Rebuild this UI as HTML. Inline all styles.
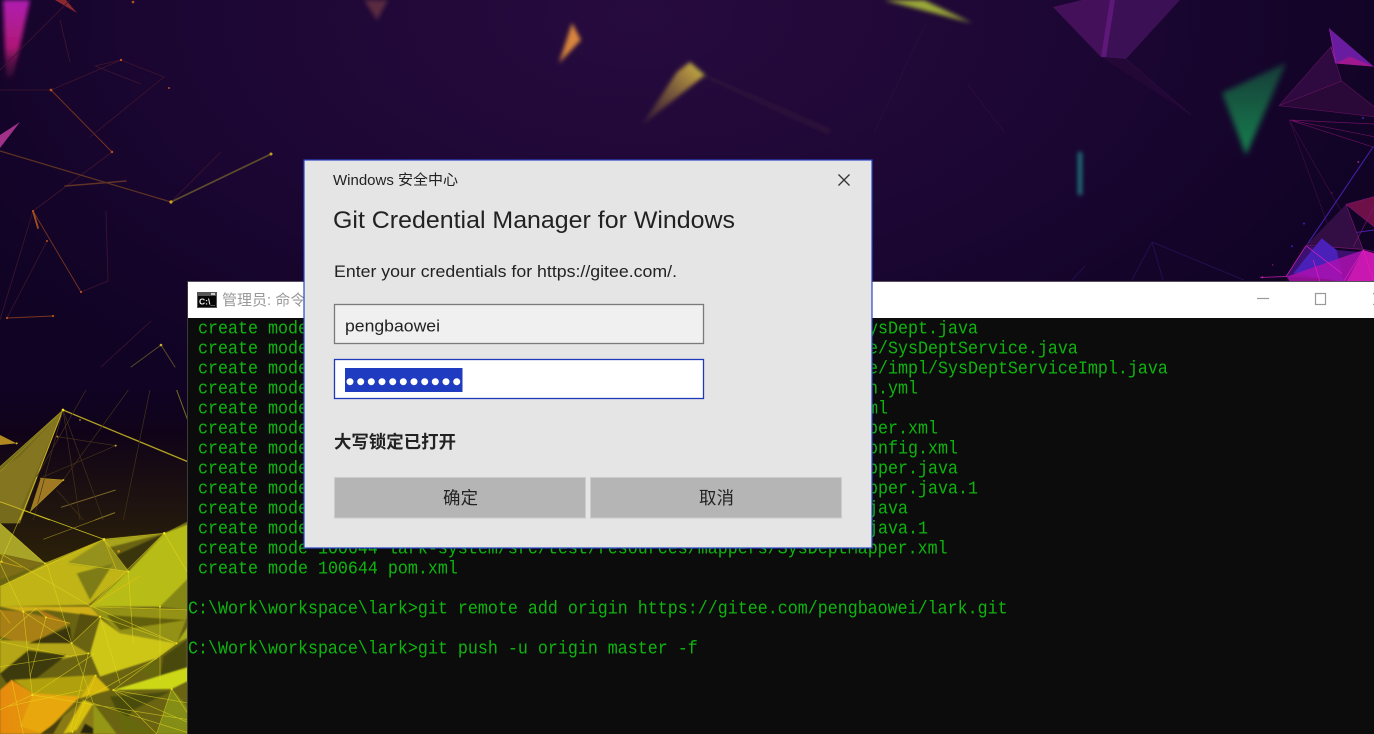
<!DOCTYPE html>
<html><head><meta charset="utf-8"><style>
html,body{margin:0;padding:0;width:1374px;height:734px;overflow:hidden;background:#16052a}
#bg{position:absolute;left:0;top:0}
#term{position:absolute;left:187px;top:281px;width:1187px;height:453px;background:#0c0c0c;overflow:hidden;border-left:1px solid #3a3a3a;box-sizing:border-box}
#bar{position:absolute;left:0;top:0;width:100%;height:37px;background:#fff;border-top:1px solid #55505a;box-sizing:border-box}
#term pre{position:absolute;margin:0;font:16.67px/18px "Liberation Mono",monospace;color:#0fb40f;white-space:pre;transform:scaleY(1.11111);transform-origin:0 0}
#ttl{position:absolute;left:34px;top:9px;font:15px/20px "Liberation Sans","Noto Sans CJK SC",sans-serif;color:#999;white-space:nowrap}
#dlg{position:absolute;left:0;top:0}
</style></head><body>
<svg id="bg" width="1374" height="734" viewBox="0 0 1374 734" xmlns="http://www.w3.org/2000/svg">
<defs>
<radialGradient id="g1" gradientUnits="userSpaceOnUse" cx="640" cy="30" r="800" gradientTransform="scale(1 .55)"><stop offset="0" stop-color="#270b3f"/><stop offset=".6" stop-color="#1b0632"/><stop offset="1" stop-color="#100324"/></radialGradient>
<linearGradient id="g2" x1="0" y1="380" x2="0" y2="560" gradientUnits="userSpaceOnUse"><stop offset="0" stop-color="#120320" stop-opacity="0"/><stop offset=".3" stop-color="#100318"/><stop offset="1" stop-color="#2a2008"/></linearGradient>
<linearGradient id="mg" x1="0" y1="0" x2="0" y2="1"><stop offset="0" stop-color="#b020b0"/><stop offset=".6" stop-color="#b01878"/><stop offset="1" stop-color="#5a1040" stop-opacity=".3"/></linearGradient>
<linearGradient id="yl" x1="1" y1="0" x2="0" y2="1"><stop offset="0" stop-color="#b8c440"/><stop offset=".2" stop-color="#b09040"/><stop offset="1" stop-color="#6a4a30" stop-opacity=".3"/></linearGradient>
<linearGradient id="gr" x1="0" y1="0" x2="0" y2="1"><stop offset="0" stop-color="#143c38"/><stop offset="1" stop-color="#16804e"/></linearGradient>
<linearGradient id="or" x1="0" y1="0" x2="1" y2="0"><stop offset="0" stop-color="#e88a10"/><stop offset="1" stop-color="#d8a810"/></linearGradient>
<filter id="b3" x="-40%" y="-40%" width="180%" height="180%"><feGaussianBlur stdDeviation="3"/></filter>
<filter id="b2" x="-60%" y="-30%" width="220%" height="160%"><feGaussianBlur stdDeviation="2"/></filter>
<filter id="bs" x="-5%" y="-5%" width="110%" height="110%"><feGaussianBlur stdDeviation="2.4"/></filter>
</defs>
<rect width="1374" height="734" fill="url(#g1)"/>
<rect y="380" width="190" height="354" fill="url(#g2)"/>

<!-- blurred shards -->
<g filter="url(#b2)">
<polygon points="3,0 30,0 13,78 6,78" fill="url(#mg)"/>
<polygon points="364,0 388,0 377,20" fill="#5a2a40"/>
<polygon points="572,23 581,40 559,63" fill="#d8853c"/>
<polygon points="690,62 705,75 642,125 677,72" fill="url(#yl)"/>
<polygon points="884,0 924,0 972,23" fill="#9aa838"/>
<polygon points="1078,152 1082,152 1082,195 1078,195" fill="#1a7a80"/>
<polygon points="704,77 708,76 832,130 828,134" fill="#40203a" opacity=".45"/>
</g>
<polygon points="1222,93 1286,63 1246,155" fill="url(#gr)" filter="url(#b3)"/>
<polygon points="55,0 66,0 77,13" fill="#8a2830"/>
<polygon points="20,122 0,135 0,148" fill="#a03088"/>

<!-- top-left lines -->
<g fill="none" stroke-linecap="round">
<g stroke="#7a3420" stroke-width=".9">
<path d="M51 90L112 152M33 211L81 292M7 318L53 316"/>
</g>
<g stroke="#3e162e" stroke-width=".8">
<path d="M51 90L121 60L164 77L90 137M121 60L95 66L141 84M0 90L51 90M112 152L33 211M47 241L7 318M106 211L108 281M151 321L101 367M70 0L0 70M70 62L60 20M33 211L0 320M171 202L221 152M81 292L108 281"/>
</g>
<path d="M0 151L171 202" stroke="#5c3222" stroke-width="1.3"/>
<path d="M171 202L271 154" stroke="#5e4c2c" stroke-width="1.7"/>
<path d="M65 186L126 181" stroke="#603228" stroke-width="1.4"/>
<path d="M33 211L38 228" stroke="#a05020" stroke-width="1.8"/>
<path d="M161 345L131 367M161 345L175 367" stroke="#5a4c26" stroke-width="1"/>
</g>
<g fill="#b85020">
<circle cx="51" cy="90" r="1.4"/><circle cx="121" cy="60" r="1.2"/><circle cx="112" cy="152" r="1.2"/><circle cx="33" cy="211" r="1.1"/><circle cx="81" cy="292" r="1.1"/><circle cx="53" cy="316" r="1.1"/><circle cx="7" cy="318" r="1.1"/><circle cx="133" cy="2" r="1.3"/><circle cx="169" cy="88" r="1"/><circle cx="47" cy="241" r="1"/>
</g>
<circle cx="171" cy="202" r="1.6" fill="#d0a020"/><circle cx="271" cy="154" r="1.5" fill="#c8a020"/><circle cx="161" cy="345" r="1.3" fill="#c8b030"/>

<!-- top-right purple -->
<polygon points="1126,59 1101,57 1191,115" fill="#2c0a3c" opacity=".5"/>
<polygon points="1053,7 1082,0 1115,0 1101,57" fill="#45105a"/>
<polygon points="1115,0 1180,0 1126,59 1101,57" fill="#3c1054"/>
<polygon points="1115,0 1110,0 1101,57 1106,57" fill="#5e187a"/>
<path d="M1126 59L1191 115M926 23L874 133M968 85L1005 133" stroke="#2e0d42" stroke-width=".8" fill="none"/>
<path d="M1152 242L1132 280M1152 242L1163 280M1152 242L1244 280M1085 266L1072 280" stroke="#25125a" stroke-width=".8" fill="none"/>

<!-- right cluster (zoom coords) -->
<g transform="translate(1260 20) scale(.3333)" fill="none">
<polygon points="57,257 213,80 245,183" fill="#2e0a40"/>
<polygon points="57,257 245,183 342,260 342,290" fill="#2a0838"/>
<path d="M57 257L213 80L245 183L57 257L342 290M245 183L342 260" stroke="#5e1258" stroke-width="2"/>
<polygon points="208,25 342,140 225,130" fill="#6a1ca0"/>
<polygon points="270,110 342,140 225,130" fill="#a01890"/>
<path d="M213 80L228 130M208 25L228 130" stroke="#a020a0" stroke-width="2"/>
<path d="M88 300L342 312M88 300L342 350M88 300L342 382" stroke="#6a1060" stroke-width="2"/>
<path d="M88 300L310 690M88 300L220 660" stroke="#3e0c44" stroke-width="2"/>
<path d="M340 380L140 676M342 630L186 652" stroke="#4a20b0" stroke-width="3"/>
<polygon points="258,553 342,530 342,620" fill="#6e1048"/>
<polygon points="138,677 258,553 310,690" fill="#320e44"/>
<path d="M258 553L342 530M258 553L342 620M258 553L310 690M342 560L280 680M140 676L310 688L342 695" stroke="#7a1674" stroke-width="2"/>
<polygon points="138,677 78,770 342,786 342,700 230,690" fill="#3c1070"/>
<polygon points="185,655 100,760 250,786 230,690" fill="#4a20b8"/>
<polygon points="80,770 310,690 342,700 342,786 90,786" fill="#b010b0" opacity=".8"/>
<polygon points="310,690 342,700 342,786 260,786" fill="#c818b0"/>
<path d="M138 677L78 770M138 677L245 760M310 690L250 786M310 690L342 786M0 772L80 770M160 720L180 786" stroke="#e020c0" stroke-width="2"/>
<g stroke="none"><circle cx="309" cy="294" r="3" fill="#4020b0"/><circle cx="295" cy="426" r="3" fill="#902090"/><circle cx="132" cy="611" r="3" fill="#3020c0"/><circle cx="96" cy="679" r="3" fill="#3020c0"/><circle cx="38" cy="735" r="2" fill="#a01860"/><circle cx="7" cy="772" r="3" fill="#c020a0"/><circle cx="216" cy="519" r="2" fill="#702060"/></g>
</g>

<!-- left yellow upper (zoom 11 coords: offset 0,390) -->
<g transform="translate(0 390) scale(.3333)" fill="none">
<polygon points="189,60 0,230 0,400 60,400" fill="#766a1c"/>
<polygon points="189,60 60,200 0,240 0,330 60,360" fill="#8a7a22" opacity=".7"/>
<polygon points="0,135 50,160 0,165" fill="#b08a20"/>
<polygon points="122,265 190,270 90,365" fill="#a07a22"/>
<path d="M189 60L60 390" stroke="#c8b020" stroke-width="3"/>
<path d="M189 60L0 230M189 60L0 245" stroke="#9a9020" stroke-width="2"/>
<path d="M189 60L563 215" stroke="#b0a020" stroke-width="4"/>
<path d="M0 335L150 390" stroke="#c8b420" stroke-width="3"/>
<path d="M183 352L347 300M285 390L345 368" stroke="#7a6428" stroke-width="3"/>
<path d="M172 140L347 167L120 265M258 0L110 260M385 0L190 270M189 60L240 390M189 60L310 390M170 300L250 390M100 390L189 60M450 0L370 390" stroke="#453418" stroke-width="2"/>
<path d="M530 0L563 90" stroke="#7a7020" stroke-width="3"/>
<path d="M120 265L190 270L90 365" stroke="#b09020" stroke-width="2"/>
<g stroke="none"><circle cx="189" cy="60" r="4" fill="#f0e020"/><circle cx="240" cy="90" r="3" fill="#a05a18"/><circle cx="347" cy="167" r="3" fill="#c8a030"/><circle cx="190" cy="270" r="3" fill="#d0a020"/><circle cx="50" cy="160" r="3" fill="#e0b020"/><circle cx="172" cy="140" r="3" fill="#b08020"/></g>
</g>

<!-- yellow mesh (zoom 9 coords: offset 0,510) -->
<g transform="translate(0 510) scale(.3333)">
<polygon points="0,40 135,160 312,88 493,70 570,30 570,680 0,680" fill="#6a6412"/>
<g filter="url(#bs)">
<polygon points="0,130 135,160 0,210" fill="#7e6e12"/>
<polygon points="312,88 493,70 140,160" fill="#a8a41e"/>
<polygon points="340,140 493,70 385,180" fill="#3a3408"/>
<polygon points="0,230 140,160 312,90 385,185 265,285 0,290" fill="#c0b416"/>
<polygon points="200,160 310,90 385,185" fill="#94921a"/>
<polygon points="230,190 340,160 270,270" fill="#7e7c12"/>
<polygon points="493,70 570,40 570,200 480,290 270,290 385,185" fill="#b8bc18"/>
<polygon points="570,200 570,300 480,290" fill="#848612"/>
<polygon points="0,290 270,290 300,320 140,300 70,305" fill="#d0b012"/>
<polygon points="0,300 70,305 210,340 85,405 0,380" fill="#a88012"/>
<polygon points="108,295 210,340 138,322" fill="#b87818"/>
<polygon points="0,390 215,400 265,430 0,490" fill="#b4a612"/>
<polygon points="85,400 210,350 215,400" fill="#3a340a"/>
<polygon points="85,420 200,435 90,520 20,520 0,490" fill="#3e3a0c"/>
<polygon points="240,310 300,320 215,400" fill="#56500c"/>
<polygon points="270,290 570,300 530,400 360,370" fill="#949212"/>
<polygon points="320,315 560,330 360,360" fill="#625e0e"/>
<polygon points="300,325 360,370 530,400 470,445 300,500 270,430" fill="#cec612"/>
<polygon points="490,440 560,390 560,500 480,510" fill="#484a0c"/>
<polygon points="420,480 470,445 480,510" fill="#66680e"/>
<polygon points="530,400 570,340 570,380" fill="#a8b018"/>
<polygon points="0,540 35,510 100,550 240,560 60,650 130,672 0,672" fill="url(#or)"/>
<polygon points="40,510 285,495 240,565 100,550" fill="#b0a010"/>
<polygon points="100,550 240,560 130,672 60,650" fill="#e8a810"/>
<polygon points="285,495 330,540 240,565" fill="#d8b810"/>
<polygon points="130,672 250,570 280,580 280,672" fill="#8a7a12"/>
<polygon points="250,570 280,580 230,660 190,672" fill="#d8c010"/>
<polygon points="340,540 570,470 570,510 515,537" fill="#ccd818"/>
<polygon points="280,580 350,672 280,672" fill="#949618"/>
<polygon points="330,560 510,545 400,600 370,640" fill="#4a4c0c"/>
<polygon points="470,672 515,537 570,600 570,672" fill="#848e12"/>
<polygon points="350,600 470,672 370,672" fill="#66680e"/>
<polygon points="240,670 255,640 280,655 280,672" fill="#2c2808"/>
<polygon points="120,672 190,620 160,672" fill="#4a400a"/>
</g>
<polygon points="0,40 135,160 0,130" fill="#a8a428"/>
<g fill="none" stroke="#e8dc20" stroke-width="2" stroke-opacity=".65">
<path d="M135 160L312 88L493 70L270 290M493 70L570 200M312 88L385 185L400 400M140 160L215 400M200 158L385 185M0 130L265 285L530 400M70 305L215 400M108 295L138 322L210 340M0 390L108 295M138 322L90 500M300 320L530 400M300 320L215 400M300 320L360 520M270 290L570 300M480 290L480 510M530 400L340 540M0 230L312 88M0 40L135 160M70 0L0 160"/>
<path d="M97 555L285 430M97 555L570 630M97 555L0 600M265 430L0 470M265 430L210 670M287 495L217 670M340 540L570 580M340 540L570 640M340 540L470 672M515 537L470 672M515 537L570 620M280 580L570 670M470 445L260 565M215 400L280 580M35 510L70 672M0 160L70 305L97 555M0 395L215 440M20 590L250 540"/>
</g>
<g fill="none" stroke="#f0c010" stroke-width="2.500" stroke-opacity=".6">
<path d="M65 172L0 155M312 88L350 180M420 198L270 290M0 300L30 340"/>
</g>
<path d="M70 0L312 88" stroke="#c8c020" stroke-width="2.500"/>
<path d="M130 88L345 8" stroke="#8a7a20" stroke-width="2"/>
<g fill="#f0e020"><circle cx="312" cy="88" r="4"/><circle cx="493" cy="70" r="4"/><circle cx="135" cy="160" r="3"/><circle cx="385" cy="185" r="3"/><circle cx="70" cy="305" r="3.500"/><circle cx="138" cy="322" r="3"/><circle cx="300" cy="320" r="3.500"/><circle cx="265" cy="430" r="3"/><circle cx="530" cy="400" r="3"/><circle cx="97" cy="555" r="3.500"/><circle cx="340" cy="540" r="3"/><circle cx="515" cy="537" r="3"/><circle cx="215" cy="400" r="3"/><circle cx="480" cy="290" r="3"/><circle cx="5" cy="155" r="3"/><circle cx="217" cy="665" r="3"/><circle cx="287" cy="497" r="3"/></g>
<circle cx="356" cy="124" r="4" fill="#c89018"/>
</g>
</svg>

<div id="term">
<div id="bar">
<svg style="position:absolute;left:9px;top:10px" width="20" height="16" viewBox="0 0 20 16"><rect width="20" height="16" fill="#555"/><rect x="1" y="4" width="18" height="11" fill="#050505"/><rect x="14" y="1" width="4" height="2" fill="#ccc"/><text x="2" y="12.500" font-family="Liberation Sans,sans-serif" font-size="8.500" font-weight="bold" fill="#eee">C:\_</text></svg>
<div id="ttl">管理员: 命令提示符</div>
<svg style="position:absolute;left:1060px;top:0" width="127" height="36" viewBox="0 0 127 36"><path d="M9 16.500H21" stroke="#999" stroke-width="1.200"/><rect x="67.500" y="11.500" width="10" height="11" fill="none" stroke="#999" stroke-width="1.200"/><path d="M125.500 11L127 13M125.500 23L127 21" stroke="#777" stroke-width="1.200"/></svg>
</div>
<pre style="left:10px;top:39px">create mode 100644 lark-system/src/main/java/com/lark/system/domain
create mode 100644 lark-system/src/main/java/com/lark/system/servic
create mode 100644 lark-system/src/main/java/com/lark/system/servic
create mode 100644 lark-system/src/main/resources/applicatio
create mode 100644 lark-system/src/main/resources/logback.x
create mode 100644 lark-system/src/main/resources/mappers/SysDeptMa
create mode 100644 lark-system/src/main/resources/mybatis-c
create mode 100644 lark-system/src/test/java/com/lark/SysDeptMa
create mode 100644 lark-system/src/test/java/com/lark/SysDeptMa
create mode 100644 lark-system/src/test/java/com/lark/Test.
create mode 100644 lark-system/src/test/java/com/lark/Test.
create mode 100644 lark-system/src/test/resources/mappers/SysDeptMapper.xml
create mode 100644 pom.xml</pre>
<pre style="left:0;top:319px">C:\Work\workspace\lark&gt;git remote add origin https://gitee.com/pengbaowei/lark.git

C:\Work\workspace\lark&gt;git push -u origin master -f</pre>
<pre style="left:680px;top:39px">ysDept.java
e/SysDeptService.java
e/impl/SysDeptServiceImpl.java
n.yml
ml
per.xml
onfig.xml
pper.java
pper.java.1
java
java.1</pre>
</div>

<svg id="dlg" width="1374" height="734" viewBox="0 0 1374 734" xmlns="http://www.w3.org/2000/svg" font-family="Liberation Sans,Noto Sans CJK SC,sans-serif" fill="#222">
<rect x="304" y="160" width="568" height="388" fill="#e5e5e5" stroke="#2a45c8" stroke-width="1.200"/>
<text x="333" y="185" font-size="14.500" textLength="125" lengthAdjust="spacingAndGlyphs">Windows 安全中心</text>
<path d="M838.500 174.500L849.500 185.500M849.500 174.500L838.500 185.500" stroke="#333" stroke-width="1.300"/>
<text x="333" y="228" font-size="24.500" textLength="402" lengthAdjust="spacingAndGlyphs">Git Credential Manager for Windows</text>
<text x="334" y="277" font-size="16.500" textLength="343" lengthAdjust="spacingAndGlyphs">Enter your credentials for https://gitee.com/.</text>
<rect x="334.500" y="304.500" width="369" height="39" fill="#f0f0f0" stroke="#7a7a7a" stroke-width="1.300"/>
<text x="345" y="331.500" font-size="16.500" textLength="95" lengthAdjust="spacingAndGlyphs">pengbaowei</text>
<rect x="334.500" y="359.500" width="369" height="39" fill="#fff" stroke="#1e3ab8" stroke-width="1.300"/>
<rect x="345" y="368" width="117.500" height="24" fill="#1f3bbf"/>
<g fill="#fff"><circle cx="350" cy="381.700" r="3.500"/><circle cx="360.700" cy="381.700" r="3.500"/><circle cx="371.300" cy="381.700" r="3.500"/><circle cx="382" cy="381.700" r="3.500"/><circle cx="392.700" cy="381.700" r="3.500"/><circle cx="403.300" cy="381.700" r="3.500"/><circle cx="414" cy="381.700" r="3.500"/><circle cx="424.700" cy="381.700" r="3.500"/><circle cx="435.300" cy="381.700" r="3.500"/><circle cx="446" cy="381.700" r="3.500"/><circle cx="456.700" cy="381.700" r="3.500"/></g>
<text x="334" y="448" font-size="17.400" font-weight="bold" textLength="122">大写锁定已打开</text>
<rect x="334.500" y="477.500" width="251" height="40.500" fill="#b5b5b5" stroke="#cccccc"/>
<rect x="590.500" y="477.500" width="251" height="40.500" fill="#b5b5b5" stroke="#cccccc"/>
<text x="443" y="504" font-size="17.400" textLength="35">确定</text>
<text x="699" y="504" font-size="17.400" textLength="35">取消</text>
</svg>
</body></html>
